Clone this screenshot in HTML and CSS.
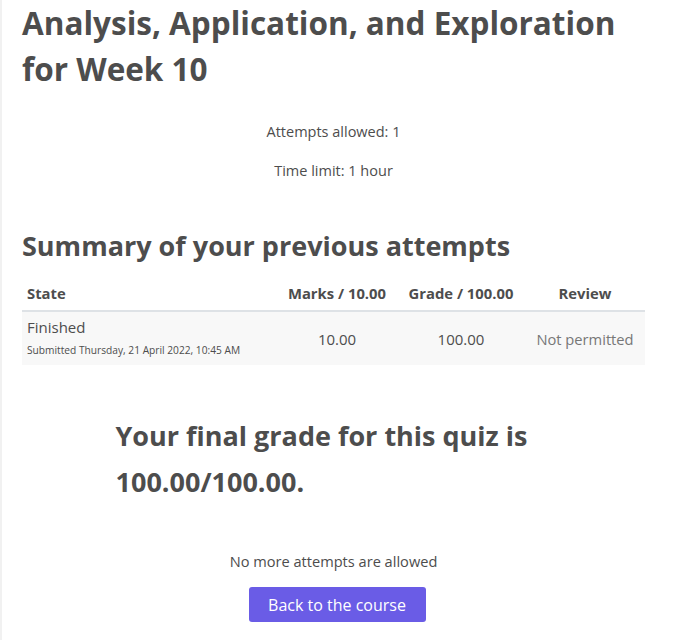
FILE: index.html
```html
<!DOCTYPE html>
<html lang="en">
<head>
<meta charset="utf-8">
<title>Quiz</title>
<link rel="stylesheet" href="styles.css">
</head>
<body>
<div class="page">
  <h1 class="title">Analysis, Application, and Exploration for Week 10</h1>
  <div class="info">
    <p>Attempts allowed: 1</p>
    <p>Time limit: 1 hour</p>
  </div>
  <h2 class="summary">Summary of your previous attempts</h2>
  <table class="attempts">
    <thead>
      <tr>
        <th class="c-state">State</th>
        <th class="c-marks">Marks / 10.00</th>
        <th class="c-grade">Grade / 100.00</th>
        <th class="c-review">Review</th>
      </tr>
    </thead>
    <tbody>
      <tr>
        <td class="c-state">Finished<span class="submitted">Submitted Thursday, 21 April 2022, 10:45 AM</span></td>
        <td class="c-marks">10.00</td>
        <td class="c-grade">100.00</td>
        <td class="c-review muted">Not permitted</td>
      </tr>
    </tbody>
  </table>
  <div class="feedback">
    <h3>Your final grade for this quiz is 100.00/100.00.</h3>
  </div>
  <div class="actions">
    <p>No more attempts are allowed</p>
    <button class="btn" type="button">Back to the course</button>
  </div>
</div>
</body>
</html>
```
FILE: styles.css
```css
html, body {
  margin: 0;
  padding: 0;
  background: #fff;
}
body {
  font-family: "Open Sans", "Liberation Sans", sans-serif;
  color: #4d4d4d;
  border-left: 2px solid #f1f1f1;
  min-height: 640px;
  box-sizing: border-box;
}
.page {
  width: 623px;
  padding-left: 20px;
}
.title {
  margin: 0;
  font-size: 31.5px;
  line-height: 46px;
  font-weight: 700;
}
.info {
  text-align: center;
  font-size: 14.5px;
  margin-top: 20px;
}
.info p {
  margin: 0;
  line-height: 39px;
}
.summary {
  margin: 36px 0 0;
  font-size: 27px;
  line-height: 40px;
  font-weight: 700;
}
.attempts {
  width: 100%;
  border-collapse: collapse;
  margin-top: 11px;
}
.attempts th {
  font-size: 14.8px;
  font-weight: 700;
  text-align: center;
  padding: 6px 5px 7px;
  line-height: 20px;
  border-bottom: 2px solid #dee2e6;
}
.attempts th.c-state, .attempts td.c-state {
  text-align: left;
}
.attempts td {
  font-size: 14.7px;
  background: #f8f8f8;
  text-align: center;
  padding: 5px;
  line-height: 20px;
  vertical-align: middle;
}
.attempts td.c-state {
  font-size: 15px;
  padding-bottom: 8px;
  vertical-align: top;
}
.attempts td.c-marks, .attempts td.c-grade {
  font-size: 15px;
}
.c-marks { width: 110px; }
.c-grade { width: 118px; }
.c-review { width: 110px; }
.submitted {
  display: block;
  margin-top: 7px;
  font-size: 10.2px;
  line-height: 13px;
}
.muted {
  color: #777;
}
.feedback {
  width: 436px;
  margin: 48px auto 0;
}
.feedback h3 {
  margin: 0;
  font-size: 27px;
  line-height: 46px;
  font-weight: 700;
}
.actions {
  text-align: center;
  margin-top: 44px;
  font-size: 14.6px;
}
.actions p {
  margin: 0 0 14px;
  line-height: 24px;
}
.btn {
  display: block;
  margin: 0 0 0 calc(50% - 85px);
  font-family: "Open Sans", "Liberation Sans", sans-serif;
  background: #6a5ce6;
  color: #fff;
  border: 0;
  border-radius: 3px;
  font-size: 16px;
  line-height: 24px;
  padding: 0;
  white-space: nowrap;
  width: 177px;
  height: 35px;
}
```
